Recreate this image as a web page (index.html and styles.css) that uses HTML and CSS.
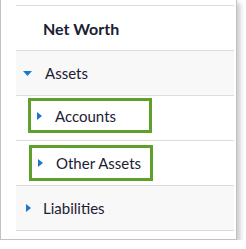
FILE: index.html
```html
<!DOCTYPE html>
<html lang="en">
<head>
    <meta charset="UTF-8">
    <meta name="viewport" content="width=device-width, initial-scale=1.0">
    <title>Net Worth</title>
    <link rel="stylesheet" href="styles.css">
</head>
<body>
    <div class="panel">
        <ul class="tree">
            <li class="row head">Net Worth</li>
            <li class="row group">
                <svg class="caret-down" width="9" height="5" viewBox="0 0 9 5"><path d="M0 0H9L4.5 5Z"/></svg>
                <span>Assets</span>
            </li>
            <li class="row sub">
                <div class="mark first">
                    <svg class="caret" width="5" height="8" viewBox="0 0 5 8"><path d="M0 0L5 4L0 8Z"/></svg>
                    <span>Accounts</span>
                </div>
            </li>
            <li class="row sub">
                <div class="mark second">
                    <svg class="caret" width="5" height="8" viewBox="0 0 5 8"><path d="M0 0L5 4L0 8Z"/></svg>
                    <span>Other Assets</span>
                </div>
            </li>
            <li class="row group closed">
                <svg class="caret" width="5" height="8" viewBox="0 0 5 8"><path d="M0 0L5 4L0 8Z"/></svg>
                <span>Liabilities</span>
            </li>
        </ul>
    </div>
</body>
</html>
```

FILE: styles.css
```css
body {
    margin: 0;
    font-family: Lato, "Open Sans", sans-serif;
    color: #1c2034;
    background: #fff;
}
.panel {
    width: 218px;
    padding: 5px 2px 8px 15px;
    border: 1px solid #c2c2c2;
    border-top: none;
    box-shadow: 3px 3px 5px rgba(0, 0, 0, 0.22);
    background: #fff;
}
.tree {
    list-style: none;
    margin: 0;
    padding: 0;
    border-top: 1px solid #dcdcdc;
}
.row {
    height: 44px;
    border-bottom: 1px solid #dcdcdc;
    display: flex;
    align-items: center;
    font-size: 15px;
}
.row.head {
    padding-left: 27px;
    font-size: 16px;
    font-weight: bold;
}
.row.group {
    background: #f8f8f8;
    padding-left: 7px;
}
.row.group .caret-down {
    margin-right: 13px;
}
.row.closed {
    padding-left: 10px;
}
.row.closed .caret {
    margin-right: 12px;
}
svg path {
    fill: #1a76cf;
}
.row.sub {
    align-items: flex-start;
}
.mark {
    box-sizing: border-box;
    width: 124px;
    height: 35px;
    margin-left: 12px;
    padding-left: 6px;
    border: 3px solid #5f9f2b;
    display: flex;
    align-items: center;
}
.mark.first {
    margin-top: 2px;
}
.mark.second {
    margin-top: 4px;
    margin-left: 13px;
    height: 36px;
}
.mark .caret {
    margin-right: 13px;
}
```
